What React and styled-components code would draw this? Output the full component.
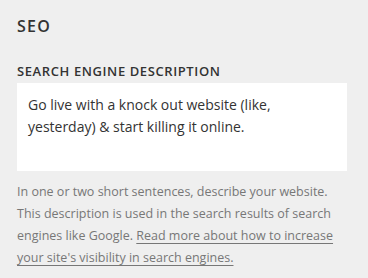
import React from "react";
import styled, { createGlobalStyle } from "styled-components";

const Global = createGlobalStyle`
  html, body { margin: 0; padding: 0; background: #efefef; }
  body { font-family: "Open Sans", "Liberation Sans", sans-serif; -webkit-font-smoothing: antialiased; }
`;

const Panel = styled.section`
  width: 368px;
  height: 278px;
  box-sizing: border-box;
  padding: 16px 21px 0 17px;
  background: #efefef;
  display: flex;
  flex-direction: column;
`;

const Title = styled.h2`
  margin: 0;
  font-size: 16px;
  line-height: 20px;
  font-weight: 600;
  color: #333;
  letter-spacing: 1.2px;
`;

const Label = styled.label`
  margin-top: 27px;
  display: block;
  font-size: 13px;
  line-height: 16px;
  font-weight: 600;
  color: #333;
  text-transform: uppercase;
  letter-spacing: 0.6px;
`;

const TextBox = styled.div`
  margin-top: 4px;
  height: 88px;
  box-sizing: border-box;
  background: #fff;
  padding: 11px 11px;
  font-size: 14px;
  line-height: 22px;
  color: #333;
`;

const Help = styled.p`
  margin: 10px 0 0;
  font-size: 12.5px;
  line-height: 22px;
  color: #777;
`;

const Link = styled.a`
  color: #777;
  text-decoration: underline;
  text-decoration-color: #777;
  text-decoration-thickness: 1px;
  text-underline-offset: 3px;
`;

export default function App() {
  return (
    <>
      <Global />
      <Panel>
        <Title>SEO</Title>
        <Label>Search Engine Description</Label>
        <TextBox>Go live with a knock out website (like, yesterday) &amp; start killing it online.</TextBox>
        <Help>
          In one or two short sentences, describe your website. This description is used in the search results of search engines like Google.{" "}
          <Link href="#">Read more about how to increase your site's visibility in search engines.</Link>
        </Help>
      </Panel>
    </>
  );
}
